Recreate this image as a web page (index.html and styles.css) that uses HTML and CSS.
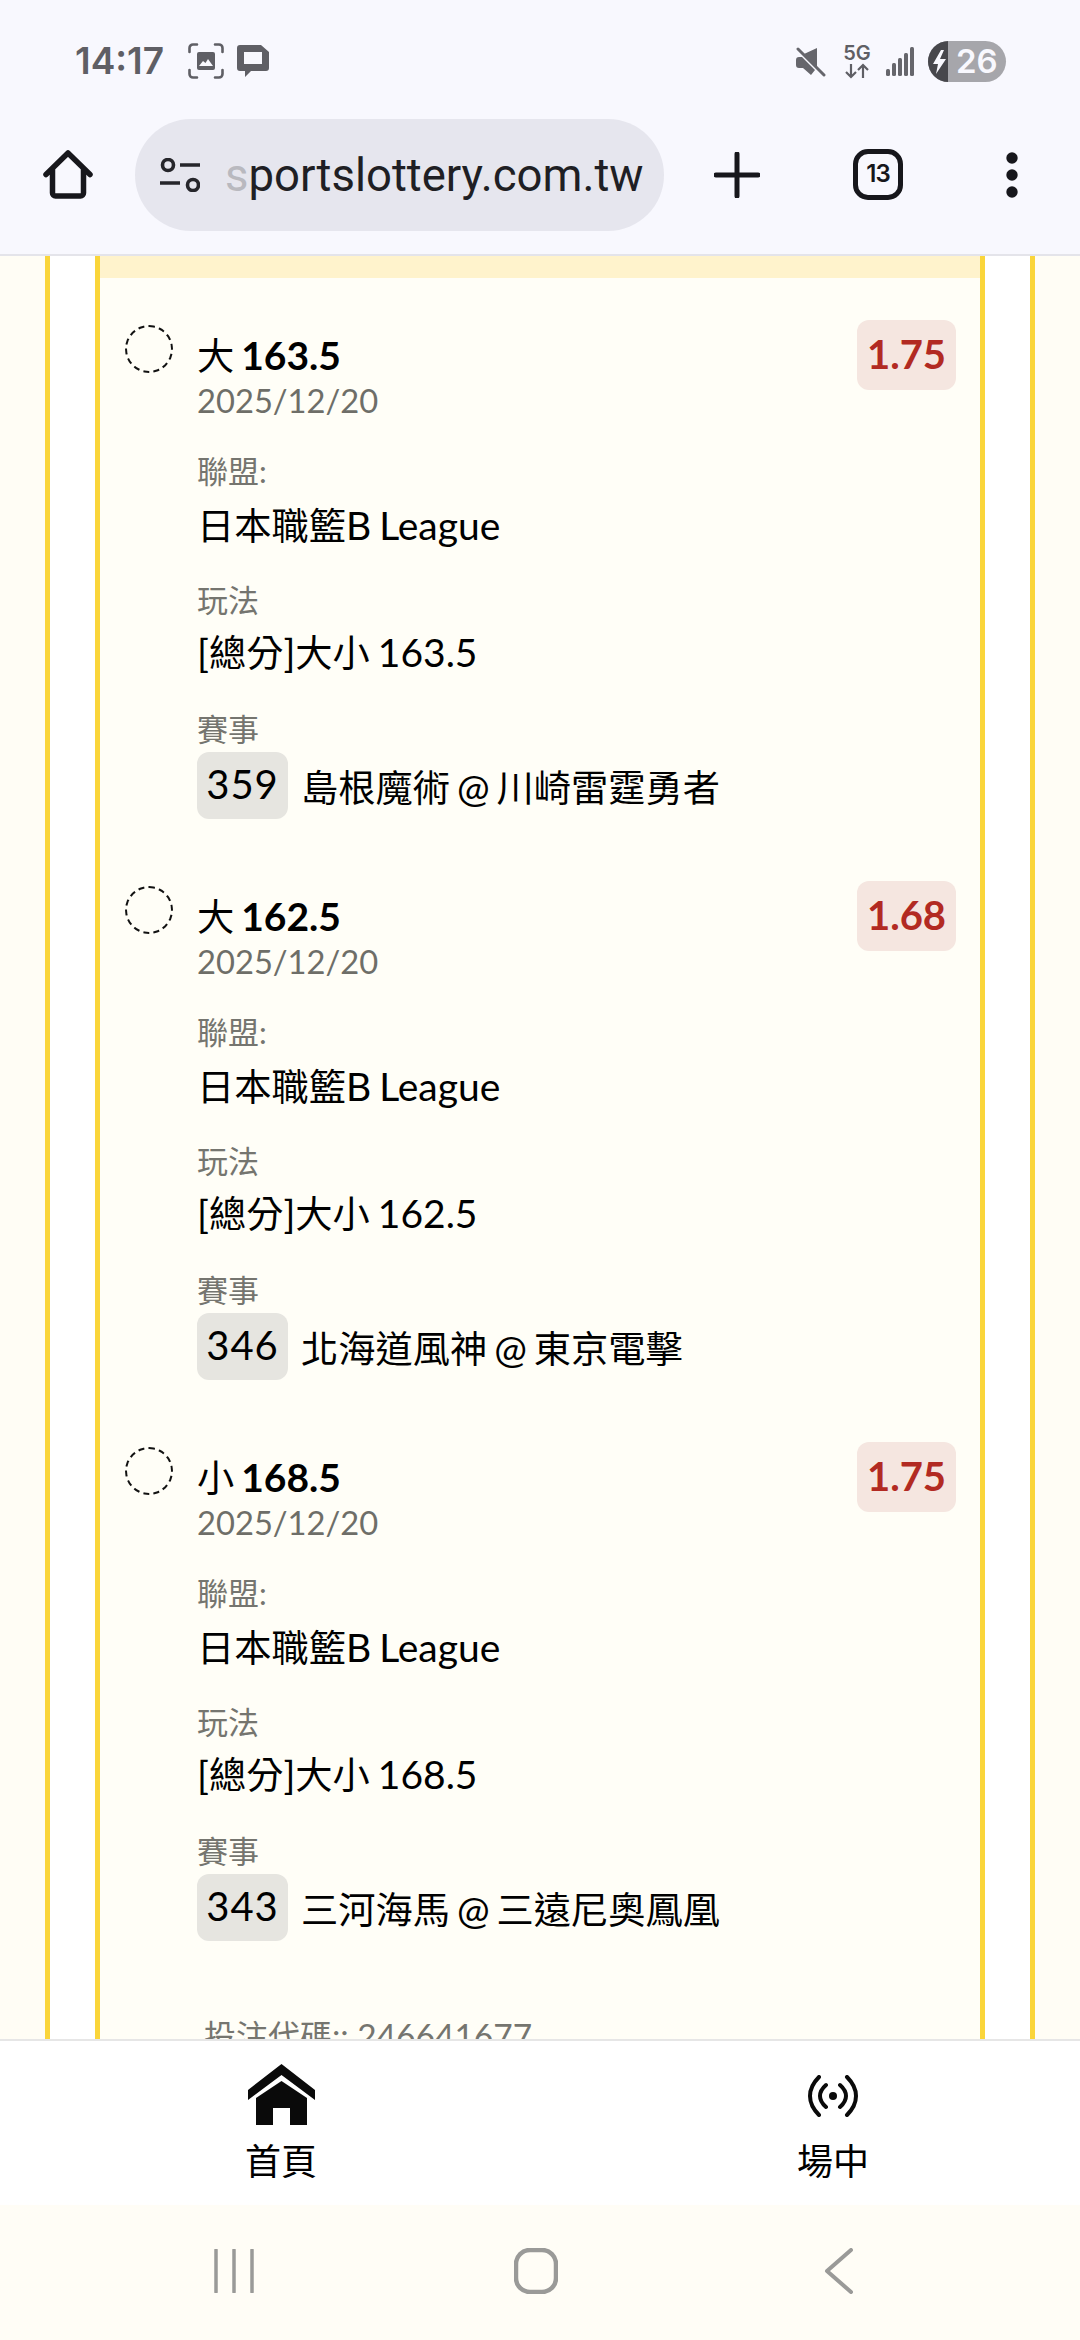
FILE: index.html
```html
<!DOCTYPE html>
<html lang="zh-Hant">
<head>
<meta charset="utf-8">
<title>sportslottery.com.tw</title>
<link rel="stylesheet" href="styles.css">
</head>
<body>
<div class="screen">
  <header class="chrome">
    <div class="status">
      <div class="status-left">
        <span class="clock">14:17</span>
        <svg class="ic-shot" viewBox="0 0 36 36"><g fill="none" stroke="#5f5f65" stroke-width="2.6" stroke-linecap="round"><path d="M1.5 9V5a3.500 3.500 0 0 1 3.500-3.500H9M27 1.500h4A3.500 3.500 0 0 1 34.500 5v4M34.500 27v4a3.500 3.500 0 0 1-3.500 3.500h-4M9 34.500H5A3.500 3.500 0 0 1 1.500 31v-4"/></g><path d="M11 9h14a2 2 0 0 1 2 2v14a2 2 0 0 1-2 2H11a2 2 0 0 1-2-2V11a2 2 0 0 1 2-2z" fill="#5f5f65"/><path d="M11 23l4-5 2.500 2 2.500-4 5 7z" fill="#f8f8fe"/></svg>
        <svg class="ic-chat" viewBox="0 0 32 32"><path fill-rule="evenodd" fill="#5f5f65" d="M3 0h21l8 7v16a3 3 0 0 1-3 3H14l-6 6v-6H3a3 3 0 0 1-3-3V3a3 3 0 0 1 3-3zM7 7v12h18V7z"/></svg>
      </div>
      <div class="status-right">
        <svg class="ic-mute" viewBox="0 0 30 30"><path fill="#66666c" d="M21 1v19L8 7zM3 10h3l13 13-4 5-8-7H3a3 3 0 0 1-3-3v-5a3 3 0 0 1 3-3z"/><path d="M2 2l26 26" stroke="#66666c" stroke-width="3" stroke-linecap="round"/></svg>
        <div class="net">
          <span class="net-label">5G</span>
          <svg class="ic-arrows" viewBox="0 0 26 16"><path d="M7 1v13M2 9l5 5 5-5M19 15V2M14 7l5-5 5 5" fill="none" stroke="#5f5f65" stroke-width="2.200"/></svg>
        </div>
        <svg class="ic-signal" viewBox="0 0 28 29"><g fill="#66666c"><rect x="0" y="22" width="4" height="7" rx="1.500"/><rect x="6" y="16" width="4" height="13" rx="1.500"/><rect x="12" y="11" width="4" height="18" rx="1.500"/><rect x="18" y="6" width="4" height="23" rx="1.500"/><rect x="24" y="0" width="4" height="29" rx="1.500"/></g></svg>
        <div class="battery">
          <span class="bolt"><svg viewBox="0 0 14 24"><path d="M8 0L0 14h5l-2 10 10-15H7l4-9z" fill="#f8f8fe"/></svg></span>
          <span class="level">26</span>
        </div>
      </div>
    </div>
    <div class="toolbar">
      <svg class="ic-home" viewBox="0 0 50 50"><path d="M3 24.500L25 3l22 21.500M9.500 19v24a3 3 0 0 0 3 3h25a3 3 0 0 0 3-3V19" fill="none" stroke="#17171c" stroke-width="5.500" stroke-linecap="round" stroke-linejoin="round"/></svg>
      <div class="omnibox">
        <svg class="ic-tune" viewBox="0 0 40 34"><g fill="none" stroke="#26262b" stroke-width="3.600"><circle cx="8" cy="7" r="5.500"/><circle cx="33" cy="27" r="5.500"/><path d="M20 7h20M0 25h20"/></g></svg>
        <div class="url"><span class="fade">s</span>portslottery.com.tw</div>
      </div>
      <svg class="ic-plus" viewBox="0 0 46 46"><path d="M23 2v42M2 23h42" stroke="#17171c" stroke-width="5" stroke-linecap="round"/></svg>
      <div class="tabs">13</div>
      <svg class="ic-more" viewBox="0 0 14 46"><g fill="#17171c"><circle cx="7" cy="6" r="5.700"/><circle cx="7" cy="23" r="5.700"/><circle cx="7" cy="40" r="5.700"/></g></svg>
    </div>
  </header>

  <main class="viewport">
    <div class="frame">
      <div class="card">
        <div class="banner"></div>

        <article class="bet">
          <span class="radio"></span>
          <div class="bet-body">
            <div class="bet-title"><span class="cj">大</span> <b>163.5</b></div>
            <div class="bet-date">2025/12/20</div>
            <div class="label label-first">聯盟:</div>
            <div class="value value-first"><span class="cj">日本職籃</span>B League</div>
            <div class="label">玩法</div>
            <div class="value">[<span class="cj">總分</span>]<span class="cj">大小</span> 163.5</div>
            <div class="label label-last">賽事</div>
            <div class="match"><span class="chip">359</span><span class="teams"><span class="cj">島根魔術</span> @ <span class="cj">川崎雷霆勇者</span></span></div>
          </div>
          <span class="odds">1.75</span>
        </article>

        <article class="bet">
          <span class="radio"></span>
          <div class="bet-body">
            <div class="bet-title"><span class="cj">大</span> <b>162.5</b></div>
            <div class="bet-date">2025/12/20</div>
            <div class="label label-first">聯盟:</div>
            <div class="value value-first"><span class="cj">日本職籃</span>B League</div>
            <div class="label">玩法</div>
            <div class="value">[<span class="cj">總分</span>]<span class="cj">大小</span> 162.5</div>
            <div class="label label-last">賽事</div>
            <div class="match"><span class="chip">346</span><span class="teams"><span class="cj">北海道風神</span> @ <span class="cj">東京電擊</span></span></div>
          </div>
          <span class="odds">1.68</span>
        </article>

        <article class="bet">
          <span class="radio"></span>
          <div class="bet-body">
            <div class="bet-title"><span class="cj">小</span> <b>168.5</b></div>
            <div class="bet-date">2025/12/20</div>
            <div class="label label-first">聯盟:</div>
            <div class="value value-first"><span class="cj">日本職籃</span>B League</div>
            <div class="label">玩法</div>
            <div class="value">[<span class="cj">總分</span>]<span class="cj">大小</span> 168.5</div>
            <div class="label label-last">賽事</div>
            <div class="match"><span class="chip">343</span><span class="teams"><span class="cj">三河海馬</span> @ <span class="cj">三遠尼奧鳳凰</span></span></div>
          </div>
          <span class="odds">1.75</span>
        </article>

        <div class="code"><span class="cj">投注代碼</span>:: 246641677</div>
      </div>
    </div>
  </main>

  <nav class="tabbar">
    <a class="tab tab-home">
      <svg class="ic-tab-home" viewBox="0 0 67 62"><path fill="#0a0a0a" d="M33.500 0L67 26v10L33.500 11 0 36V26z"/><path fill="#0a0a0a" d="M33.500 17L59 34v27H42V44H25v17H8V34z"/></svg>
      <span>首頁</span>
    </a>
    <a class="tab tab-live">
      <svg class="ic-tab-live" viewBox="0 0 50 42"><g fill="none" stroke="#0a0a0a" stroke-width="4" stroke-linecap="round"><path d="M11 2C-1 14-1 28 11 40M39 2c12 12 12 26 0 38M18 10c-8 7-8 15 0 22M32 10c8 7 8 15 0 22"/></g><circle cx="25" cy="21" r="4" fill="#0a0a0a"/></svg>
      <span>場中</span>
    </a>
  </nav>

  <footer class="sysnav">
    <svg class="ic-recents" viewBox="0 0 40 44"><path d="M2 1v42M20 1v42M38 1v42" stroke="#9a9a98" stroke-width="3.500" stroke-linecap="round"/></svg>
    <svg class="ic-square" viewBox="0 0 44 46"><rect x="2" y="2" width="40" height="42" rx="14" fill="none" stroke="#9a9a98" stroke-width="4.500"/></svg>
    <svg class="ic-back" viewBox="0 0 30 46"><path d="M27 2L3 23l24 21" fill="none" stroke="#9a9a98" stroke-width="4" stroke-linecap="round" stroke-linejoin="round"/></svg>
  </footer>
</div>
</body>
</html>
```
FILE: styles.css
```css
* { box-sizing: border-box; }
html, body { margin: 0; padding: 0; }
body {
  width: 1080px;
  height: 2340px;
  overflow: hidden;
  font-family: Lato, "Noto Sans CJK TC", sans-serif;
  color: #000;
}
svg { display: block; flex: none; }
.screen { display: flex; flex-direction: column; height: 2340px; }
.cj { font-size: 0.955em; line-height: 1; }

.chrome { background: #f8f8fe; border-bottom: 2px solid #e4e4ea; height: 256px; flex: none; }
.status { height: 119px; display: flex; justify-content: space-between; align-items: flex-start; padding: 41px 74px 0 75px; }
.status-left, .status-right { display: flex; align-items: center; }
.clock { font-family: Inter, sans-serif; font-weight: 600; font-size: 37px; line-height: 40px; color: #5f5f65; width: 113px; }
.ic-shot { width: 36px; height: 36px; }
.ic-chat { width: 32px; height: 32px; margin-left: 13px; }
.ic-mute { width: 30px; height: 30px; margin-right: 18px; }
.net { width: 26px; display: flex; flex-direction: column; align-items: center; margin-right: 16px; }
.net-label { font-family: Inter, sans-serif; font-weight: 600; font-size: 20px; line-height: 18px; color: #5f5f65; }
.ic-arrows { width: 26px; height: 16px; margin-top: 1px; }
.ic-signal { width: 28px; height: 29px; margin-right: 14px; }
.battery { width: 78px; height: 41px; border-radius: 21px; overflow: hidden; display: flex; background: #a6a6ab; }
.bolt { width: 20px; background: #47474c; display: flex; align-items: center; justify-content: center; }
.bolt svg { width: 14px; height: 24px; margin-left: 4px; }
.level { font-family: Inter, sans-serif; font-weight: 600; font-size: 33px; line-height: 41px; color: #f8f8fe; margin-left: 8px; }

.toolbar { height: 135px; display: flex; align-items: flex-start; padding-left: 43px; }
.ic-home { width: 50px; height: 50px; margin-top: 31px; }
.omnibox { width: 529px; height: 112px; margin: 0 0 0 42px; border-radius: 56px; background: #e6e6ee; display: flex; align-items: center; padding-left: 25px; }
.ic-tune { width: 40px; height: 34px; }
.url { font-family: Roboto, sans-serif; font-size: 45.5px; line-height: 58px; color: #1f1f24; margin: 2px 0 0 25px; white-space: nowrap; }
.fade { color: #b9b9bf; }
.ic-plus { width: 46px; height: 46px; margin: 33px 0 0 50px; }
.tabs { width: 50px; height: 51px; margin: 30px 0 0 93px; border: 5.5px solid #17171c; border-radius: 15px; font-family: Inter, sans-serif; font-size: 24px; font-weight: 600; line-height: 40px; text-align: center; letter-spacing: -1px; color: #17171c; }
.ic-more { width: 14px; height: 46px; margin: 33px 0 0 102px; }

.viewport { flex: 1; min-height: 0; overflow: hidden; background: #fffdf5; padding: 0 45px; }
.frame { background: #fff; border-left: 5px solid #fad53a; border-right: 5px solid #fad53a; padding: 0 45px; }
.card { background: #fffef7; border-left: 5px solid #fad53a; border-right: 5px solid #fad53a; min-height: 2000px; }
.banner { height: 22px; background: #fff3cc; margin-bottom: 42px; }

.bet { display: flex; align-items: flex-start; padding: 0 24px 62px 25px; }
.radio { width: 48px; height: 48px; border: 2px dashed #111; border-radius: 50%; margin-top: 5px; flex: none; }
.bet-body { flex: 1; margin-left: 24px; min-width: 0; }
.bet-title { font-size: 39px; line-height: 48px; margin-top: 11px; word-spacing: -3px; }
.bet-title b { font-weight: 700; }
.bet-date { font-size: 32.7px; line-height: 44px; color: #6e6e68; }
.label { font-size: 31px; line-height: 44px; color: #75756f; margin-top: 29px; }
.label-first { margin-top: 26px; }
.label-last { margin-top: 31px; }
.value { font-size: 39px; line-height: 48px; margin-top: 6px; word-spacing: -2px; }
.value-first { margin-top: 8px; }
.match { display: flex; align-items: center; margin-top: 1px; }
.chip { width: 91px; height: 67px; background: #e6e5e0; border-radius: 12px; font-size: 40px; line-height: 64px; text-align: center; letter-spacing: 1px; }
.teams { font-size: 39px; line-height: 48px; margin-left: 13px; padding-top: 2px; word-spacing: -3px; }
.odds { width: 99px; height: 70px; background: #f5e6e0; border-radius: 12px; color: #b22a22; font-weight: 700; font-size: 40px; line-height: 68px; text-align: center; flex: none; }
.code { font-size: 33.5px; line-height: 44px; color: #75756f; margin: 10px 0 0 104px; }

.tabbar { height: 166px; flex: none; background: #fff; border-top: 2px solid #e6e6e6; display: flex; }
.tab { width: 200px; display: flex; flex-direction: column; align-items: center; }
.tab span { font-size: 36px; line-height: 48px; }
.tab-home { margin-left: 181px; padding-top: 23px; }
.tab-home span { margin-top: 11px; }
.tab-live { margin-left: 352px; padding-top: 34px; }
.tab-live span { margin-top: 20px; }
.ic-tab-home { width: 67px; height: 62px; }
.ic-tab-live { width: 50px; height: 42px; }

.sysnav { height: 135px; flex: none; background: #fffdf6; display: flex; align-items: flex-start; padding: 43px 0 0 214px; }
.ic-recents { width: 40px; height: 44px; margin-top: 1px; }
.ic-square { width: 44px; height: 46px; margin-left: 260px; }
.ic-back { width: 30px; height: 46px; margin-left: 266px; }
```
